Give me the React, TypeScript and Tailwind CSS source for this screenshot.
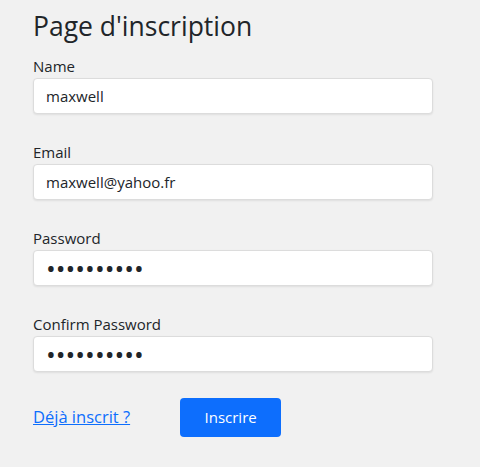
import { useState } from "react";

const fields = [
	{ id: "name", label: "Name", type: "text", value: "maxwell" },
	{ id: "email", label: "Email", type: "text", value: "maxwell@yahoo.fr" },
	{ id: "password", label: "Password", type: "password", value: "maxwell123" },
	{ id: "confirm", label: "Confirm Password", type: "password", value: "maxwell123" },
];

export default function App() {
	const [values, setValues] = useState<Record<string, string>>(
		Object.fromEntries(fields.map((f) => [f.id, f.value]))
	);

	return (
		<div className="min-h-[467px] w-[480px] bg-[#f1f1f1] font-['Open_Sans',sans-serif] text-[#212529]">
			<div className="flex w-[433px] flex-col pl-[33px] pt-[9px]">
				<h1 className="text-[26.5px] leading-[34px] font-normal">Page d'inscription</h1>
				<div className="mt-[11px] flex flex-col gap-[26px]">
					{fields.map((field) => (
						<div key={field.id} className="flex flex-col">
							<label htmlFor={field.id} className="text-[15px] leading-[24px]">
								{field.label}
							</label>
							<input
								id={field.id}
								type={field.type}
								value={values[field.id]}
								onChange={(e) => setValues({ ...values, [field.id]: e.target.value })}
								className={
									field.type === "password"
										? "h-[36px] w-full rounded-[4px] border border-[#dcdcdc] bg-white px-[12px] text-[26px] leading-[36px] text-[#212529] shadow-[0_1px_2px_rgba(0,0,0,0.08)] outline-none"
										: "h-[36px] w-full rounded-[4px] border border-[#dcdcdc] bg-white px-[12px] text-[15px] text-[#212529] shadow-[0_1px_2px_rgba(0,0,0,0.08)] outline-none"
								}
							/>
						</div>
					))}
				</div>
				<div className="mt-[26px] flex items-center">
					<a href="#" className="text-[16.5px] text-[#0d6efd] underline">
						Déjà inscrit ?
					</a>
					<button className="ml-[50px] h-[39px] w-[101px] rounded-[4px] bg-[#0d6efd] text-[15px] text-white">
						Inscrire
					</button>
				</div>
			</div>
		</div>
	);
}
